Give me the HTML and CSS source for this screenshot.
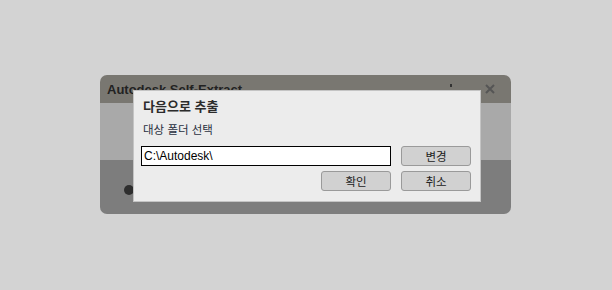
FILE: index.html
```html
<!DOCTYPE html>
<html lang="ko">
  <head>
    <meta charset="UTF-8" />
    <title>Autodesk Self-Extract</title>
    <link rel="stylesheet" href="styles.css">
  </head>
  <body>
    <div class="window">
      <div class="titlebar">
        <span class="app-title">Autodesk Self-Extract</span>
        <span class="menu-dot"></span>
        <svg class="close" width="10" height="10" viewBox="0 0 10 10">
          <path d="M1 1 L9 9 M9 1 L1 9" stroke="#555" stroke-width="2" />
        </svg>
      </div>
      <div class="band"></div>
      <div class="footer-area">
        <span class="radio"></span>
      </div>

      <!-- folder dialog on top of the main window -->
      <div class="dialog">
        <h1 class="dialog-title">다음으로 추출</h1>
        <p class="dialog-label">대상 폴더 선택</p>
        <div class="row">
          <input class="path-input" type="text" value="C:\Autodesk\" />
          <button class="btn">변경</button>
        </div>
        <div class="row row-end">
          <button class="btn">확인</button>
          <button class="btn">취소</button>
        </div>
      </div>
    </div>
  </body>
</html>
```

FILE: styles.css
```css
body {
  margin: 0;
  background-color: #d3d3d3;
  font-family: "Liberation Sans", "Noto Sans CJK KR", sans-serif;
  padding: 75px 0 0 100px;
}

.window {
  position: relative;
  width: 411px;
  height: 139px;
  border-radius: 7px;
  overflow: hidden;
  display: flex;
  flex-direction: column;
}

.titlebar {
  height: 28px;
  background-color: #797771;
  display: flex;
  align-items: center;
  padding: 0 0 0 7px;
}

.app-title {
  font-weight: bold;
  font-size: 13px;
  color: #222;
  margin-top: 1px;
}

.menu-dot {
  width: 2px;
  height: 3px;
  background-color: #333;
  margin-left: 208px;
  margin-top: -8px;
}

.close {
  margin-left: 33px;
  margin-top: 0;
}

.band {
  height: 57px;
  background-color: #a9a9a9;
}

.footer-area {
  flex: 1;
  background-color: #7d7d7d;
  position: relative;
}

.radio {
  position: absolute;
  left: 24px;
  top: 25px;
  width: 10px;
  height: 10px;
  border-radius: 50%;
  background-color: #2e2e2e;
}

.dialog {
  position: absolute;
  left: 33px;
  top: 15px;
  width: 348px;
  height: 112px;
  box-sizing: border-box;
  background-color: #ececec;
  border: 1px solid #c4c4c4;
  padding: 0 9px 0 7px;
}

.dialog-title {
  font-family: "Noto Sans CJK KR", sans-serif;
  font-size: 13px;
  font-weight: bold;
  color: #2b2b2b;
  margin: 6px 0 0 2px;
  line-height: 18px;
}

.dialog-label {
  font-family: "Noto Sans CJK KR", sans-serif;
  font-size: 11.5px;
  color: #2a3040;
  margin: 6px 0 0 2px;
  line-height: 16px;
}

.row {
  display: flex;
  gap: 10px;
  margin-top: 9px;
}

.row + .row {
  margin-top: 5px;
}

.row-end {
  justify-content: flex-end;
}

.path-input {
  width: 250px;
  height: 20px;
  box-sizing: border-box;
  border: 1px solid #000;
  background-color: #fff;
  font-family: "Liberation Sans", sans-serif;
  font-size: 12px;
  padding: 0 2px;
  margin: 0;
  color: #000;
}

.btn {
  width: 70px;
  height: 20px;
  box-sizing: border-box;
  background-color: #d1d1d1;
  border: 1px solid #9a9a9a;
  border-radius: 3px;
  font-family: "Noto Sans CJK KR", sans-serif;
  font-size: 11.5px;
  color: #222;
  padding: 0;
  line-height: 16px;
}
```
